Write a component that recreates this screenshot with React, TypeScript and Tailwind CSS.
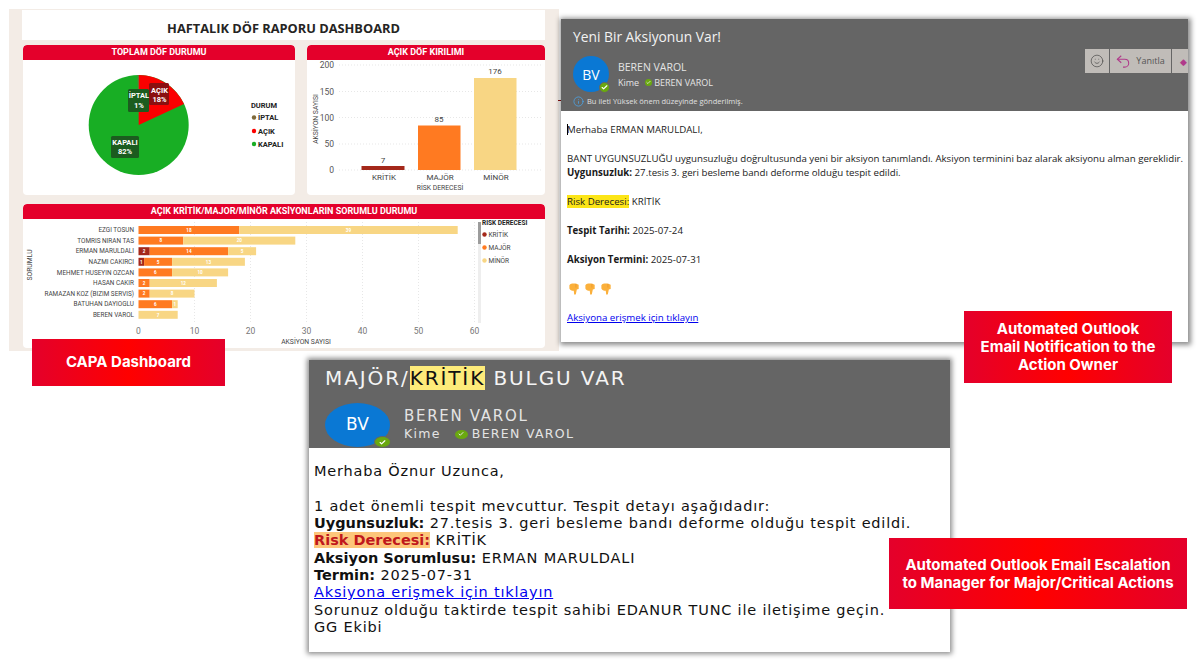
import { Check, Info, Smile } from "lucide-react"

const owners = [
    { name: "EZGI TOSUN", k: 0, m: 18, n: 39 },
    { name: "TOMRIS NIRAN TAS", k: 0, m: 8, n: 20 },
    { name: "ERMAN MARULDALI", k: 2, m: 14, n: 5 },
    { name: "NAZMI CAKIRCI", k: 1, m: 5, n: 13 },
    { name: "MEHMET HUSEYIN OZCAN", k: 0, m: 6, n: 10 },
    { name: "HASAN CAKIR", k: 0, m: 2, n: 12 },
    { name: "RAMAZAN KOZ (BIZIM SERVIS)", k: 0, m: 2, n: 8 },
    { name: "BATUHAN DAYIOGLU", k: 0, m: 6, n: 1 },
    { name: "BEREN VAROL", k: 0, m: 0, n: 7 },
]

const unit = 5.6
const barX = 138.5

function PanelTitle({ children }: { children: string }) {
    return (
        <div className="h-[15px] rounded-t-[4px] bg-[#e4002b] text-center text-[9px] leading-[15px] font-bold text-white font-['Roboto',sans-serif]">
            {children}
        </div>
    )
}

function PieChart() {
    return (
        <svg viewBox="23 60 272 135" className="block h-[135px] w-[272px] font-['Roboto',sans-serif]">
            <circle cx="138.7" cy="125" r="50" fill="#18ae24" />
            <path d="M138.7 125 L138.7 75 A50 50 0 0 1 184 104 Z" fill="#fb0000" />
            <path d="M138.7 125 L138.7 75 L137.6 75 Z" fill="#7f6a3a" />
            <rect x="128" y="89" width="21" height="23" rx="1.5" fill="#1c5c1f" />
            <rect x="149" y="83" width="20" height="22" rx="1.5" fill="#8a1010" />
            <rect x="111" y="136" width="28" height="22" rx="1.5" fill="#1c5c1f" />
            <g fill="#fff" fontSize="7.5" fontWeight="700" textAnchor="middle">
                <text x="139" y="98">İPTAL</text>
                <text x="139" y="108">1%</text>
                <text x="159.5" y="93">AÇIK</text>
                <text x="159.5" y="102">18%</text>
                <text x="125" y="145">KAPALI</text>
                <text x="125" y="154">82%</text>
            </g>
            <g fontSize="7.5" fontWeight="700" fill="#222">
                <text x="251" y="108">DURUM</text>
                <circle cx="254" cy="117.5" r="2.2" fill="#7f6a3a" />
                <text x="258" y="120">İPTAL</text>
                <circle cx="254" cy="131" r="2.2" fill="#fb0000" />
                <text x="258" y="133.5">AÇIK</text>
                <circle cx="254" cy="144" r="2.2" fill="#18ae24" />
                <text x="258" y="147">KAPALI</text>
            </g>
        </svg>
    )
}

function RiskChart() {
    const ticks = [
        { label: "200", y: 65 },
        { label: "150", y: 91.5 },
        { label: "100", y: 117.5 },
        { label: "50", y: 144 },
        { label: "0", y: 170 },
    ]
    return (
        <svg viewBox="307 60 238 135" className="block h-[135px] w-[238px] font-['Roboto',sans-serif]">
            {ticks.map((t) => (
                <g key={t.label}>
                    <line x1="339" x2="543" y1={t.y} y2={t.y} stroke="#dddddd" strokeWidth="0.7" strokeDasharray="1 2" />
                    <text x="334" y={t.y + 3} textAnchor="end" fontSize="8.5" fill="#555">{t.label}</text>
                </g>
            ))}
            <text transform="translate(318 119) rotate(-90)" fontSize="6.8" textAnchor="middle" fill="#444">AKSİYON SAYISI</text>
            <rect x="361.5" y="166" width="43" height="4" fill="#a4281a" />
            <rect x="418" y="125.5" width="42.5" height="44.5" fill="#ff7a21" />
            <rect x="474" y="78" width="42.5" height="92" fill="#f8d684" />
            <g fontSize="8" textAnchor="middle" fill="#444">
                <text x="383" y="163">7</text>
                <text x="439" y="122">85</text>
                <text x="495" y="74">176</text>
                <text x="384" y="180">KRİTİK</text>
                <text x="440" y="180">MAJÖR</text>
                <text x="496" y="180">MİNÖR</text>
            </g>
            <text x="440" y="190" fontSize="6.8" textAnchor="middle" fill="#444">RİSK DERECESİ</text>
        </svg>
    )
}

function OwnerChart() {
    return (
        <svg viewBox="23 219 522 129" className="block h-[129px] w-[522px] font-['Roboto',sans-serif]">
            {[0, 10, 20, 30, 40, 50, 60].map((v) => (
                <g key={v}>
                    {v > 0 && (
                        <line x1={barX + v * unit} x2={barX + v * unit} y1="222" y2="322" stroke="#dddddd" strokeWidth="0.7" strokeDasharray="1 2" />
                    )}
                    <text x={barX + v * unit} y="334" textAnchor="middle" fontSize="8.5" fill="#777">{v}</text>
                </g>
            ))}
            {owners.map((o, i) => {
                const y = 226 + i * 10.6
                const x1 = barX + o.k * unit
                const x2 = x1 + o.m * unit
                return (
                    <g key={o.name}>
                        <text x="134" y={y + 6.2} textAnchor="end" fontSize="6.4" fill="#444">{o.name}</text>
                        {o.k > 0 && <rect x={barX} y={y} width={o.k * unit} height="8" fill="#a4281a" />}
                        {o.m > 0 && <rect x={x1} y={y} width={o.m * unit} height="8" fill="#ff7a21" />}
                        <rect x={x2} y={y} width={o.n * unit} height="8" fill="#f8d684" />
                        <g fontSize="4.6" fontWeight="700" fill="#fff" textAnchor="middle">
                            {o.k > 0 && <text x={barX + (o.k * unit) / 2} y={y + 5.8}>{o.k}</text>}
                            {o.m > 0 && <text x={x1 + (o.m * unit) / 2} y={y + 5.8}>{o.m}</text>}
                            <text x={x2 + (o.n * unit) / 2} y={y + 5.8}>{o.n}</text>
                        </g>
                    </g>
                )
            })}
            <text transform="translate(32 265) rotate(-90)" fontSize="6.8" textAnchor="middle" fill="#444">SORUMLU</text>
            <text x="306" y="344" textAnchor="middle" fontSize="6.8" fill="#444">AKSİYON SAYISI</text>
            <rect x="478" y="222" width="3" height="101" fill="#eeeeee" />
            <rect x="478" y="222" width="3" height="22" fill="#9c9c9c" />
            <g fontSize="6.5" fill="#444">
                <text x="482" y="225" fontWeight="700" fill="#222">RİSK DERECESİ</text>
                <circle cx="484.5" cy="234.5" r="2.2" fill="#a4281a" />
                <text x="488.5" y="237">KRİTİK</text>
                <circle cx="484.5" cy="247.5" r="2.2" fill="#ff7a21" />
                <text x="488.5" y="250">MAJÖR</text>
                <circle cx="484.5" cy="260.5" r="2.2" fill="#f8d684" />
                <text x="488.5" y="263">MİNÖR</text>
            </g>
        </svg>
    )
}

function Dashboard() {
    return (
        <div className="absolute left-[9px] top-[9px] h-[342px] w-[550px] bg-[#f3ece6] pl-[13px] pr-[14px] pt-px">
            <div className="h-[30px] bg-white text-center text-[12.8px] leading-[36px] font-bold text-[#252423] font-['Open_Sans',sans-serif]">
                HAFTALIK DÖF RAPORU DASHBOARD
            </div>
            <div className="mt-[5px] flex gap-3">
                <div className="ml-px w-[272px] overflow-hidden rounded-[4px] bg-white">
                    <PanelTitle>TOPLAM DÖF DURUMU</PanelTitle>
                    <PieChart />
                </div>
                <div className="w-[238px] overflow-hidden rounded-[4px] bg-white">
                    <PanelTitle>AÇIK DÖF KIRILIMI</PanelTitle>
                    <RiskChart />
                </div>
            </div>
            <div className="ml-px mt-[9px] w-[522px] overflow-hidden rounded-[4px] bg-white">
                <PanelTitle>AÇIK KRİTİK/MAJOR/MİNÖR AKSİYONLARIN SORUMLU DURUMU</PanelTitle>
                <OwnerChart />
            </div>
        </div>
    )
}

function Avatar({ big }: { big?: boolean }) {
    return (
        <div className={big
            ? "relative flex h-[44px] w-[65px] shrink-0 items-center justify-center rounded-[50%] bg-[#0a78d4] text-[17px] text-white"
            : "relative flex h-[36px] w-[36px] shrink-0 items-center justify-center rounded-full bg-[#0a78d4] text-[14px] text-white"}>
            BV
            <span className={big
                ? "absolute -bottom-[1px] -right-[1px] flex h-[12px] w-[17px] items-center justify-center rounded-[50%] border border-[#656565] bg-[#6aa90f]"
                : "absolute -bottom-[1px] -right-[1px] flex h-[11px] w-[11px] items-center justify-center rounded-full border border-[#656565] bg-[#6aa90f]"}>
                <Check size={7} strokeWidth={4} className="text-white" />
            </span>
        </div>
    )
}

function PointingHand() {
    return (
        <svg viewBox="0 0 14 14" className="h-[13px] w-[13px]">
            <path d="M1.5 3.5 C3 1.5 6 1.5 9 2 L11.5 3 L11.5 7.5 L9.5 8 L8.5 13 C8 14 6.8 14 6.6 13 L6.2 9.5 C4 9.5 2 8.5 1.5 7 Z" fill="#fbb03b" />
            <path d="M8.5 2 L8.5 6" stroke="#e8922a" strokeWidth="0.7" />
        </svg>
    )
}

function ReplyIcon() {
    return (
        <svg viewBox="0 0 16 16" className="h-[14px] w-[14px]" fill="none" stroke="#b03a8a" strokeWidth="1.2">
            <path d="M6 2 L1.5 6 L6 10" />
            <path d="M1.5 6 L10 6 C13 6 14.5 8 14.5 10.5 C14.5 13 12.5 15 10 15 L8 15" />
        </svg>
    )
}

function ActionMail() {
    return (
        <div className="absolute left-[561px] top-[19px] h-[323px] w-[627px] overflow-hidden bg-white shadow-[1px_1px_5px_2px_rgba(0,0,0,0.45)] font-['Open_Sans',sans-serif]">
            <div className="h-[92px] bg-[#656565] pl-3 pt-[8px] text-white">
                <div className="text-[13.8px] leading-[19px] text-[#f2f2f2]">Yeni Bir Aksiyonun Var!</div>
                <div className="mt-[2px] flex items-start justify-between">
                    <div className="mt-[8px] flex gap-[9px]">
                        <Avatar />
                        <div className="pt-[3px] text-[#e4e4e4]">
                            <div className="text-[10.5px] leading-[16.5px]">BEREN VAROL</div>
                            <div className="flex items-center text-[9px] leading-[14px]">
                                Kime
                                <span className="ml-[6px] mr-[2px] flex h-[7px] w-[7px] items-center justify-center rounded-full bg-[#6aa90f]">
                                    <Check size={5} strokeWidth={4} />
                                </span>
                                BEREN VAROL
                            </div>
                        </div>
                    </div>
                    <div className="mt-px flex h-[24px] items-stretch gap-px text-[9px] text-[#555]">
                        <div className="flex w-[24px] items-center justify-center bg-[#c0bcb8]">
                            <Smile size={14} strokeWidth={1} className="text-[#333]" />
                        </div>
                        <div className="flex w-[61px] items-center justify-center gap-[6px] bg-[#c0bcb8]">
                            <ReplyIcon />
                            Yanıtla
                        </div>
                        <div className="flex w-[16px] items-center bg-[#c0bcb8] pl-2">
                            <span className="text-[9px] leading-none text-[#b03a8a]">◆</span>
                        </div>
                    </div>
                </div>
                <div className="mt-[3px] flex items-center gap-[3px] text-[7.5px] leading-[12px] text-[#e0e0e0]">
                    <Info size={11} strokeWidth={1.6} className="text-[#4aa8f0]" />
                    Bu ileti Yüksek önem düzeyinde gönderilmiş.
                </div>
            </div>
            <div className="relative pl-[5px] pt-[12px] text-[9.7px] leading-[14.4px] text-[#1a1a1a]">
                <span className="absolute left-[6px] top-[13px] h-[11px] w-px bg-black" />
                <p className="pl-px">Merhaba ERMAN MARULDALI,</p>
                <p className="mt-[14.5px] whitespace-nowrap pl-px">BANT UYGUNSUZLUĞU uygunsuzluğu doğrultusunda yeni bir aksiyon tanımlandı. Aksiyon terminini baz alarak aksiyonu alman gereklidir.</p>
                <p className="pl-px"><b>Uygunsuzluk:</b> 27.tesis 3. geri besleme bandı deforme olduğu tespit edildi.</p>
                <p className="mt-[14.5px] pl-px"><span className="bg-[#fce517]">Risk Derecesi:</span> KRİTİK</p>
                <p className="mt-[14.5px] pl-px"><b>Tespit Tarihi:</b> 2025-07-24</p>
                <p className="mt-[14.5px] pl-px"><b>Aksiyon Termini:</b> 2025-07-31</p>
                <div className="mt-[15px] flex h-[14px] gap-[3px] pl-[2px]">
                    <PointingHand />
                    <PointingHand />
                    <PointingHand />
                </div>
                <p className="mt-[15px] pl-px"><a className="text-[#0000ee] underline">Aksiyona erişmek için tıklayın</a></p>
            </div>
        </div>
    )
}

function EscalationMail() {
    return (
        <div className="absolute left-[309px] top-[360px] h-[292px] w-[641px] overflow-hidden bg-white shadow-[0_0_5px_2px_rgba(0,0,0,0.45)] font-['DejaVu_Sans',sans-serif]">
            <div className="h-[88px] bg-[#656565] pl-[16px] pt-[6px]">
                <div className="text-[20px] leading-[25px] tracking-[1.9px] text-[#f4f4f4]">
                    MAJÖR/<span className="bg-[#fdeb7a] text-[#111]">KRİTİK</span> BULGU VAR
                </div>
                <div className="mt-[12px] flex gap-[14px]">
                    <Avatar big />
                    <div className="pt-[4px] text-[#e4e4e4]">
                        <div className="text-[15px] leading-[19px] tracking-[1.7px]">BEREN VAROL</div>
                        <div className="flex items-center text-[12.5px] leading-[16px] tracking-[1.3px]">
                            Kime
                            <span className="ml-[14px] mr-[4px] flex h-[9px] w-[13px] items-center justify-center rounded-[50%] bg-[#6aa90f]">
                                <Check size={6} strokeWidth={4} />
                            </span>
                            BEREN VAROL
                        </div>
                    </div>
                </div>
            </div>
            <div className="pl-[5px] pt-[15px] text-[14.5px] leading-[17.3px] tracking-[0.8px] text-[#111]">
                <p>Merhaba Öznur Uzunca,</p>
                <p className="mt-[17.5px]">1 adet önemli tespit mevcuttur. Tespit detayı aşağıdadır:</p>
                <p><b className="tracking-normal">Uygunsuzluk:</b> 27.tesis 3. geri besleme bandı deforme olduğu tespit edildi.</p>
                <p><b className="bg-[#fdc67a] tracking-normal text-[#c0181c]">Risk Derecesi:</b> KRİTİK</p>
                <p><b className="tracking-normal">Aksiyon Sorumlusu:</b> ERMAN MARULDALI</p>
                <p><b className="tracking-normal">Termin:</b> 2025-07-31</p>
                <p><a className="text-[#0000ee] underline">Aksiyona erişmek için tıklayın</a></p>
                <p>Sorunuz olduğu taktirde tespit sahibi EDANUR TUNC ile iletişime geçin.</p>
                <p>GG Ekibi</p>
            </div>
        </div>
    )
}

function Caption({ className, children }: { className: string; children: React.ReactNode }) {
    return (
        <div className={`absolute flex items-center justify-center bg-[linear-gradient(90deg,#e4002b,#ff0000_50%,#e4002b)] text-center text-[15px] font-bold text-white font-['Inter',sans-serif] ${className}`}>
            <div>{children}</div>
        </div>
    )
}

function App() {
    return (
        <div className="relative h-[665px] w-[1197px] overflow-hidden bg-white">
            <Dashboard />
            <div className="absolute left-[558px] top-[100px] h-px w-[4px] bg-[#8a1010]" />
            <ActionMail />
            <EscalationMail />
            <Caption className="left-[32px] top-[339px] h-[47px] w-[193px]">CAPA Dashboard</Caption>
            <Caption className="left-[964px] top-[311px] h-[72px] w-[208px] leading-[18px]">
                Automated Outlook<br />Email Notification to the<br />Action Owner
            </Caption>
            <Caption className="left-[889px] top-[538px] h-[71px] w-[298px] leading-[18px]">
                Automated Outlook Email Escalation<br />to Manager for Major/Critical Actions
            </Caption>
        </div>
    )
}

export default App
